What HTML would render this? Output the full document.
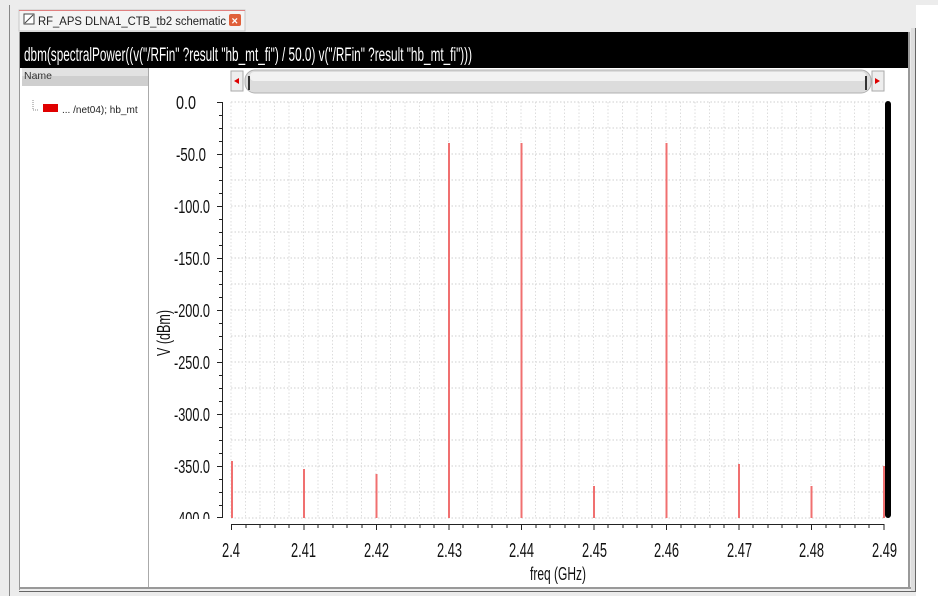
<!DOCTYPE html>
<html><head><style>
body{margin:0;width:938px;height:596px;overflow:hidden;background:#fff;font-family:"Liberation Sans",sans-serif}
</style></head><body>
<svg width="938" height="596" xmlns="http://www.w3.org/2000/svg" font-family="Liberation Sans, sans-serif">
<rect width="938" height="596" fill="#fff"/>
<rect x="0" y="0" width="9" height="596" fill="#ececec"/>
<rect x="0" y="0" width="938" height="5" fill="#ececec"/>
<line x1="9.5" y1="5" x2="9.5" y2="596" stroke="#888"/>
<rect x="10" y="5" width="906" height="591" fill="#ececec"/>
<!-- tab -->
<rect x="19" y="10" width="226" height="21" fill="#f4f4f4" stroke="#c8c8c8"/>
<line x1="19" y1="10.5" x2="245" y2="10.5" stroke="#e08080"/>
<rect x="24" y="14" width="10" height="10" fill="#fff" stroke="#444"/>
<line x1="25" y1="23" x2="33" y2="15" stroke="#444"/>
<text x="38" y="25" font-size="11.5" fill="#222" textLength="188" lengthAdjust="spacingAndGlyphs">RF_APS DLNA1_CTB_tb2 schematic</text>
<rect x="229" y="14" width="12" height="12" fill="#e0603a" rx="2"/>
<text x="231.5" y="24.5" font-size="11" font-weight="bold" fill="#fff">×</text>
<!-- frame -->
<rect x="19" y="32" width="890" height="555" fill="#fff"/>
<rect x="19" y="32" width="890" height="36" fill="#000"/>
<text x="24" y="61" font-size="19" fill="#fff" textLength="448" lengthAdjust="spacingAndGlyphs">dbm(spectralPower((v("/RFin" ?result "hb_mt_fi") / 50.0) v("/RFin" ?result "hb_mt_fi")))</text>
<rect x="908" y="32" width="2" height="557" fill="#999"/>
<rect x="911" y="28" width="4" height="564" fill="#ddd"/>
<line x1="915.5" y1="28" x2="915.5" y2="592" stroke="#666"/>
<rect x="19" y="587" width="892" height="2" fill="#999"/>
<line x1="19" y1="591.5" x2="916" y2="591.5" stroke="#666"/>
<line x1="19.5" y1="32" x2="19.5" y2="590" stroke="#999"/>
<!-- left panel -->
<rect x="22" y="68" width="126" height="18" fill="#cfcfcf"/>
<rect x="22" y="68" width="126" height="8" fill="#e2e2e2"/>
<text x="24" y="79" font-size="10.5" fill="#333">Name</text>
<line x1="148.5" y1="68" x2="148.5" y2="587" stroke="#aaa"/>
<path d="M33 100 V110 H39" stroke="#888" fill="none" stroke-dasharray="1,1"/>
<rect x="43" y="104" width="15" height="8" fill="#e00000"/>
<text x="62" y="113" font-size="10" fill="#222">... /net04); hb_mt</text>
<!-- scrollbar -->
<rect x="231" y="71" width="12" height="20" fill="#eee" stroke="#aaa"/>
<path d="M234 81 L239 78 L239 84 Z" fill="#d00"/>
<rect x="245" y="70" width="626" height="23" rx="10" fill="#dcdcdc" stroke="#b0b0b0"/>
<rect x="250" y="72" width="616" height="9" rx="4" fill="#f2f2f2"/>
<rect x="248" y="76" width="2" height="14" fill="#333"/>
<rect x="865" y="76" width="2" height="14" fill="#333"/>
<rect x="872" y="71" width="12" height="20" fill="#eee" stroke="#aaa"/>
<path d="M880 81 L875 78 L875 84 Z" fill="#d00"/>
<!-- grid -->
<g stroke="#cfcfcf" stroke-dasharray="1.5,2">
<line x1="231" y1="102" x2="884" y2="102"/>
<line x1="231" y1="128" x2="884" y2="128"/><line x1="231" y1="154" x2="884" y2="154"/>
<line x1="231" y1="180" x2="884" y2="180"/><line x1="231" y1="206" x2="884" y2="206"/>
<line x1="231" y1="232" x2="884" y2="232"/><line x1="231" y1="258" x2="884" y2="258"/>
<line x1="231" y1="284" x2="884" y2="284"/><line x1="231" y1="310" x2="884" y2="310"/>
<line x1="231" y1="336" x2="884" y2="336"/><line x1="231" y1="362" x2="884" y2="362"/>
<line x1="231" y1="388" x2="884" y2="388"/><line x1="231" y1="414" x2="884" y2="414"/>
<line x1="231" y1="440" x2="884" y2="440"/><line x1="231" y1="466" x2="884" y2="466"/>
<line x1="231" y1="492" x2="884" y2="492"/><line x1="231" y1="518" x2="884" y2="518"/>
</g>
<g stroke="#ddd" stroke-dasharray="1.5,2">
<line x1="231" y1="102" x2="231" y2="518"/><line x1="245.5" y1="102" x2="245.5" y2="518"/><line x1="260" y1="102" x2="260" y2="518"/><line x1="274.5" y1="102" x2="274.5" y2="518"/><line x1="289" y1="102" x2="289" y2="518"/>
<line x1="303.5" y1="102" x2="303.5" y2="518"/><line x1="318" y1="102" x2="318" y2="518"/><line x1="332.5" y1="102" x2="332.5" y2="518"/><line x1="347" y1="102" x2="347" y2="518"/><line x1="361.5" y1="102" x2="361.5" y2="518"/>
<line x1="376" y1="102" x2="376" y2="518"/><line x1="390.5" y1="102" x2="390.5" y2="518"/><line x1="405" y1="102" x2="405" y2="518"/><line x1="419.5" y1="102" x2="419.5" y2="518"/><line x1="434" y1="102" x2="434" y2="518"/>
<line x1="448.5" y1="102" x2="448.5" y2="518"/><line x1="463" y1="102" x2="463" y2="518"/><line x1="477.5" y1="102" x2="477.5" y2="518"/><line x1="492" y1="102" x2="492" y2="518"/><line x1="506.5" y1="102" x2="506.5" y2="518"/>
<line x1="521" y1="102" x2="521" y2="518"/><line x1="535.5" y1="102" x2="535.5" y2="518"/><line x1="550" y1="102" x2="550" y2="518"/><line x1="564.5" y1="102" x2="564.5" y2="518"/><line x1="579" y1="102" x2="579" y2="518"/>
<line x1="593.5" y1="102" x2="593.5" y2="518"/><line x1="608" y1="102" x2="608" y2="518"/><line x1="622.5" y1="102" x2="622.5" y2="518"/><line x1="637" y1="102" x2="637" y2="518"/><line x1="651.5" y1="102" x2="651.5" y2="518"/>
<line x1="666" y1="102" x2="666" y2="518"/><line x1="680.5" y1="102" x2="680.5" y2="518"/><line x1="695" y1="102" x2="695" y2="518"/><line x1="709.5" y1="102" x2="709.5" y2="518"/><line x1="724" y1="102" x2="724" y2="518"/>
<line x1="738.5" y1="102" x2="738.5" y2="518"/><line x1="753" y1="102" x2="753" y2="518"/><line x1="767.5" y1="102" x2="767.5" y2="518"/><line x1="782" y1="102" x2="782" y2="518"/><line x1="796.5" y1="102" x2="796.5" y2="518"/>
<line x1="811" y1="102" x2="811" y2="518"/><line x1="825.5" y1="102" x2="825.5" y2="518"/><line x1="840" y1="102" x2="840" y2="518"/><line x1="854.5" y1="102" x2="854.5" y2="518"/><line x1="869" y1="102" x2="869" y2="518"/>
</g>
<!-- y axis -->
<line x1="222.5" y1="102" x2="222.5" y2="518" stroke="#222"/>
<g stroke="#222">
<line x1="217" y1="102.5" x2="223" y2="102.5"/><line x1="217" y1="154.5" x2="223" y2="154.5"/><line x1="217" y1="206.5" x2="223" y2="206.5"/><line x1="217" y1="258.5" x2="223" y2="258.5"/><line x1="217" y1="310.5" x2="223" y2="310.5"/><line x1="217" y1="362.5" x2="223" y2="362.5"/><line x1="217" y1="414.5" x2="223" y2="414.5"/><line x1="217" y1="466.5" x2="223" y2="466.5"/><line x1="217" y1="517.5" x2="223" y2="517.5"/>
<line x1="219" y1="128.5" x2="223" y2="128.5"/><line x1="219" y1="180.5" x2="223" y2="180.5"/><line x1="219" y1="232.5" x2="223" y2="232.5"/><line x1="219" y1="284.5" x2="223" y2="284.5"/><line x1="219" y1="336.5" x2="223" y2="336.5"/><line x1="219" y1="388.5" x2="223" y2="388.5"/><line x1="219" y1="440.5" x2="223" y2="440.5"/><line x1="219" y1="492.5" x2="223" y2="492.5"/>
<line x1="219" y1="115.5" x2="223" y2="115.5"/><line x1="219" y1="141.5" x2="223" y2="141.5"/><line x1="219" y1="167.5" x2="223" y2="167.5"/><line x1="219" y1="193.5" x2="223" y2="193.5"/><line x1="219" y1="219.5" x2="223" y2="219.5"/><line x1="219" y1="245.5" x2="223" y2="245.5"/><line x1="219" y1="271.5" x2="223" y2="271.5"/><line x1="219" y1="297.5" x2="223" y2="297.5"/><line x1="219" y1="323.5" x2="223" y2="323.5"/><line x1="219" y1="349.5" x2="223" y2="349.5"/><line x1="219" y1="375.5" x2="223" y2="375.5"/><line x1="219" y1="401.5" x2="223" y2="401.5"/><line x1="219" y1="427.5" x2="223" y2="427.5"/><line x1="219" y1="453.5" x2="223" y2="453.5"/><line x1="219" y1="479.5" x2="223" y2="479.5"/><line x1="219" y1="505.5" x2="223" y2="505.5"/>
</g>
<g font-size="18" fill="#111" text-anchor="end">
<text x="196" y="109" textLength="20" lengthAdjust="spacingAndGlyphs">0.0</text>
<text x="206" y="161" textLength="30" lengthAdjust="spacingAndGlyphs">-50.0</text>
<text x="210" y="213" textLength="36" lengthAdjust="spacingAndGlyphs">-100.0</text>
<text x="210" y="265" textLength="36" lengthAdjust="spacingAndGlyphs">-150.0</text>
<text x="210" y="317" textLength="36" lengthAdjust="spacingAndGlyphs">-200.0</text>
<text x="210" y="369" textLength="36" lengthAdjust="spacingAndGlyphs">-250.0</text>
<text x="210" y="421" textLength="36" lengthAdjust="spacingAndGlyphs">-300.0</text>
<text x="210" y="473" textLength="36" lengthAdjust="spacingAndGlyphs">-350.0</text>
<text x="210" y="525" textLength="36" lengthAdjust="spacingAndGlyphs">-400.0</text>
</g>
<rect x="150" y="519" width="70" height="10" fill="#fff"/>
<text transform="translate(170,356) rotate(-90)" font-size="18" fill="#111" textLength="46" lengthAdjust="spacingAndGlyphs">V (dBm)</text>
<!-- x axis -->
<line x1="231" y1="524.5" x2="884" y2="524.5" stroke="#222"/>
<g stroke="#222">
<line x1="231.5" y1="524" x2="231.5" y2="530"/><line x1="304" y1="524" x2="304" y2="530"/><line x1="376.5" y1="524" x2="376.5" y2="530"/><line x1="449" y1="524" x2="449" y2="530"/><line x1="521.5" y1="524" x2="521.5" y2="530"/><line x1="594" y1="524" x2="594" y2="530"/><line x1="666.5" y1="524" x2="666.5" y2="530"/><line x1="739" y1="524" x2="739" y2="530"/><line x1="811.5" y1="524" x2="811.5" y2="530"/><line x1="884" y1="524" x2="884" y2="530"/>
<line x1="246" y1="524" x2="246" y2="528"/><line x1="260" y1="524" x2="260" y2="528"/><line x1="275" y1="524" x2="275" y2="528"/><line x1="289" y1="524" x2="289" y2="528"/>
<line x1="318" y1="524" x2="318" y2="528"/><line x1="333" y1="524" x2="333" y2="528"/><line x1="347" y1="524" x2="347" y2="528"/><line x1="362" y1="524" x2="362" y2="528"/>
<line x1="391" y1="524" x2="391" y2="528"/><line x1="405" y1="524" x2="405" y2="528"/><line x1="420" y1="524" x2="420" y2="528"/><line x1="434" y1="524" x2="434" y2="528"/>
<line x1="463" y1="524" x2="463" y2="528"/><line x1="478" y1="524" x2="478" y2="528"/><line x1="492" y1="524" x2="492" y2="528"/><line x1="507" y1="524" x2="507" y2="528"/>
<line x1="536" y1="524" x2="536" y2="528"/><line x1="550" y1="524" x2="550" y2="528"/><line x1="565" y1="524" x2="565" y2="528"/><line x1="579" y1="524" x2="579" y2="528"/>
<line x1="608" y1="524" x2="608" y2="528"/><line x1="623" y1="524" x2="623" y2="528"/><line x1="637" y1="524" x2="637" y2="528"/><line x1="652" y1="524" x2="652" y2="528"/>
<line x1="681" y1="524" x2="681" y2="528"/><line x1="695" y1="524" x2="695" y2="528"/><line x1="710" y1="524" x2="710" y2="528"/><line x1="724" y1="524" x2="724" y2="528"/>
<line x1="753" y1="524" x2="753" y2="528"/><line x1="768" y1="524" x2="768" y2="528"/><line x1="782" y1="524" x2="782" y2="528"/><line x1="797" y1="524" x2="797" y2="528"/>
<line x1="826" y1="524" x2="826" y2="528"/><line x1="840" y1="524" x2="840" y2="528"/><line x1="855" y1="524" x2="855" y2="528"/><line x1="869" y1="524" x2="869" y2="528"/>
</g>
<g font-size="20" fill="#111">
<text x="222" y="557" textLength="18" lengthAdjust="spacingAndGlyphs">2.4</text>
<text x="291" y="557" textLength="25" lengthAdjust="spacingAndGlyphs">2.41</text>
<text x="364" y="557" textLength="25" lengthAdjust="spacingAndGlyphs">2.42</text>
<text x="437" y="557" textLength="25" lengthAdjust="spacingAndGlyphs">2.43</text>
<text x="509" y="557" textLength="25" lengthAdjust="spacingAndGlyphs">2.44</text>
<text x="582" y="557" textLength="25" lengthAdjust="spacingAndGlyphs">2.45</text>
<text x="654" y="557" textLength="25" lengthAdjust="spacingAndGlyphs">2.46</text>
<text x="727" y="557" textLength="25" lengthAdjust="spacingAndGlyphs">2.47</text>
<text x="799" y="557" textLength="25" lengthAdjust="spacingAndGlyphs">2.48</text>
<text x="872" y="557" textLength="25" lengthAdjust="spacingAndGlyphs">2.49</text>
</g>
<text x="530" y="580" font-size="18" fill="#111" textLength="56" lengthAdjust="spacingAndGlyphs">freq (GHz)</text>
<!-- spectral lines -->
<g stroke="#f07070" stroke-width="2">
<line x1="232" y1="461" x2="232" y2="518"/>
<line x1="304" y1="469" x2="304" y2="518"/>
<line x1="376.5" y1="474" x2="376.5" y2="518"/>
<line x1="449" y1="143" x2="449" y2="518"/>
<line x1="521.5" y1="143" x2="521.5" y2="518"/>
<line x1="594" y1="486" x2="594" y2="518"/>
<line x1="666.5" y1="143" x2="666.5" y2="518"/>
<line x1="739" y1="464" x2="739" y2="518"/>
<line x1="811.5" y1="486" x2="811.5" y2="518"/>
<line x1="884" y1="466" x2="884" y2="518"/>
</g>
<rect x="885" y="101" width="6" height="417" rx="3" fill="#000"/>
</svg>
</body></html>
